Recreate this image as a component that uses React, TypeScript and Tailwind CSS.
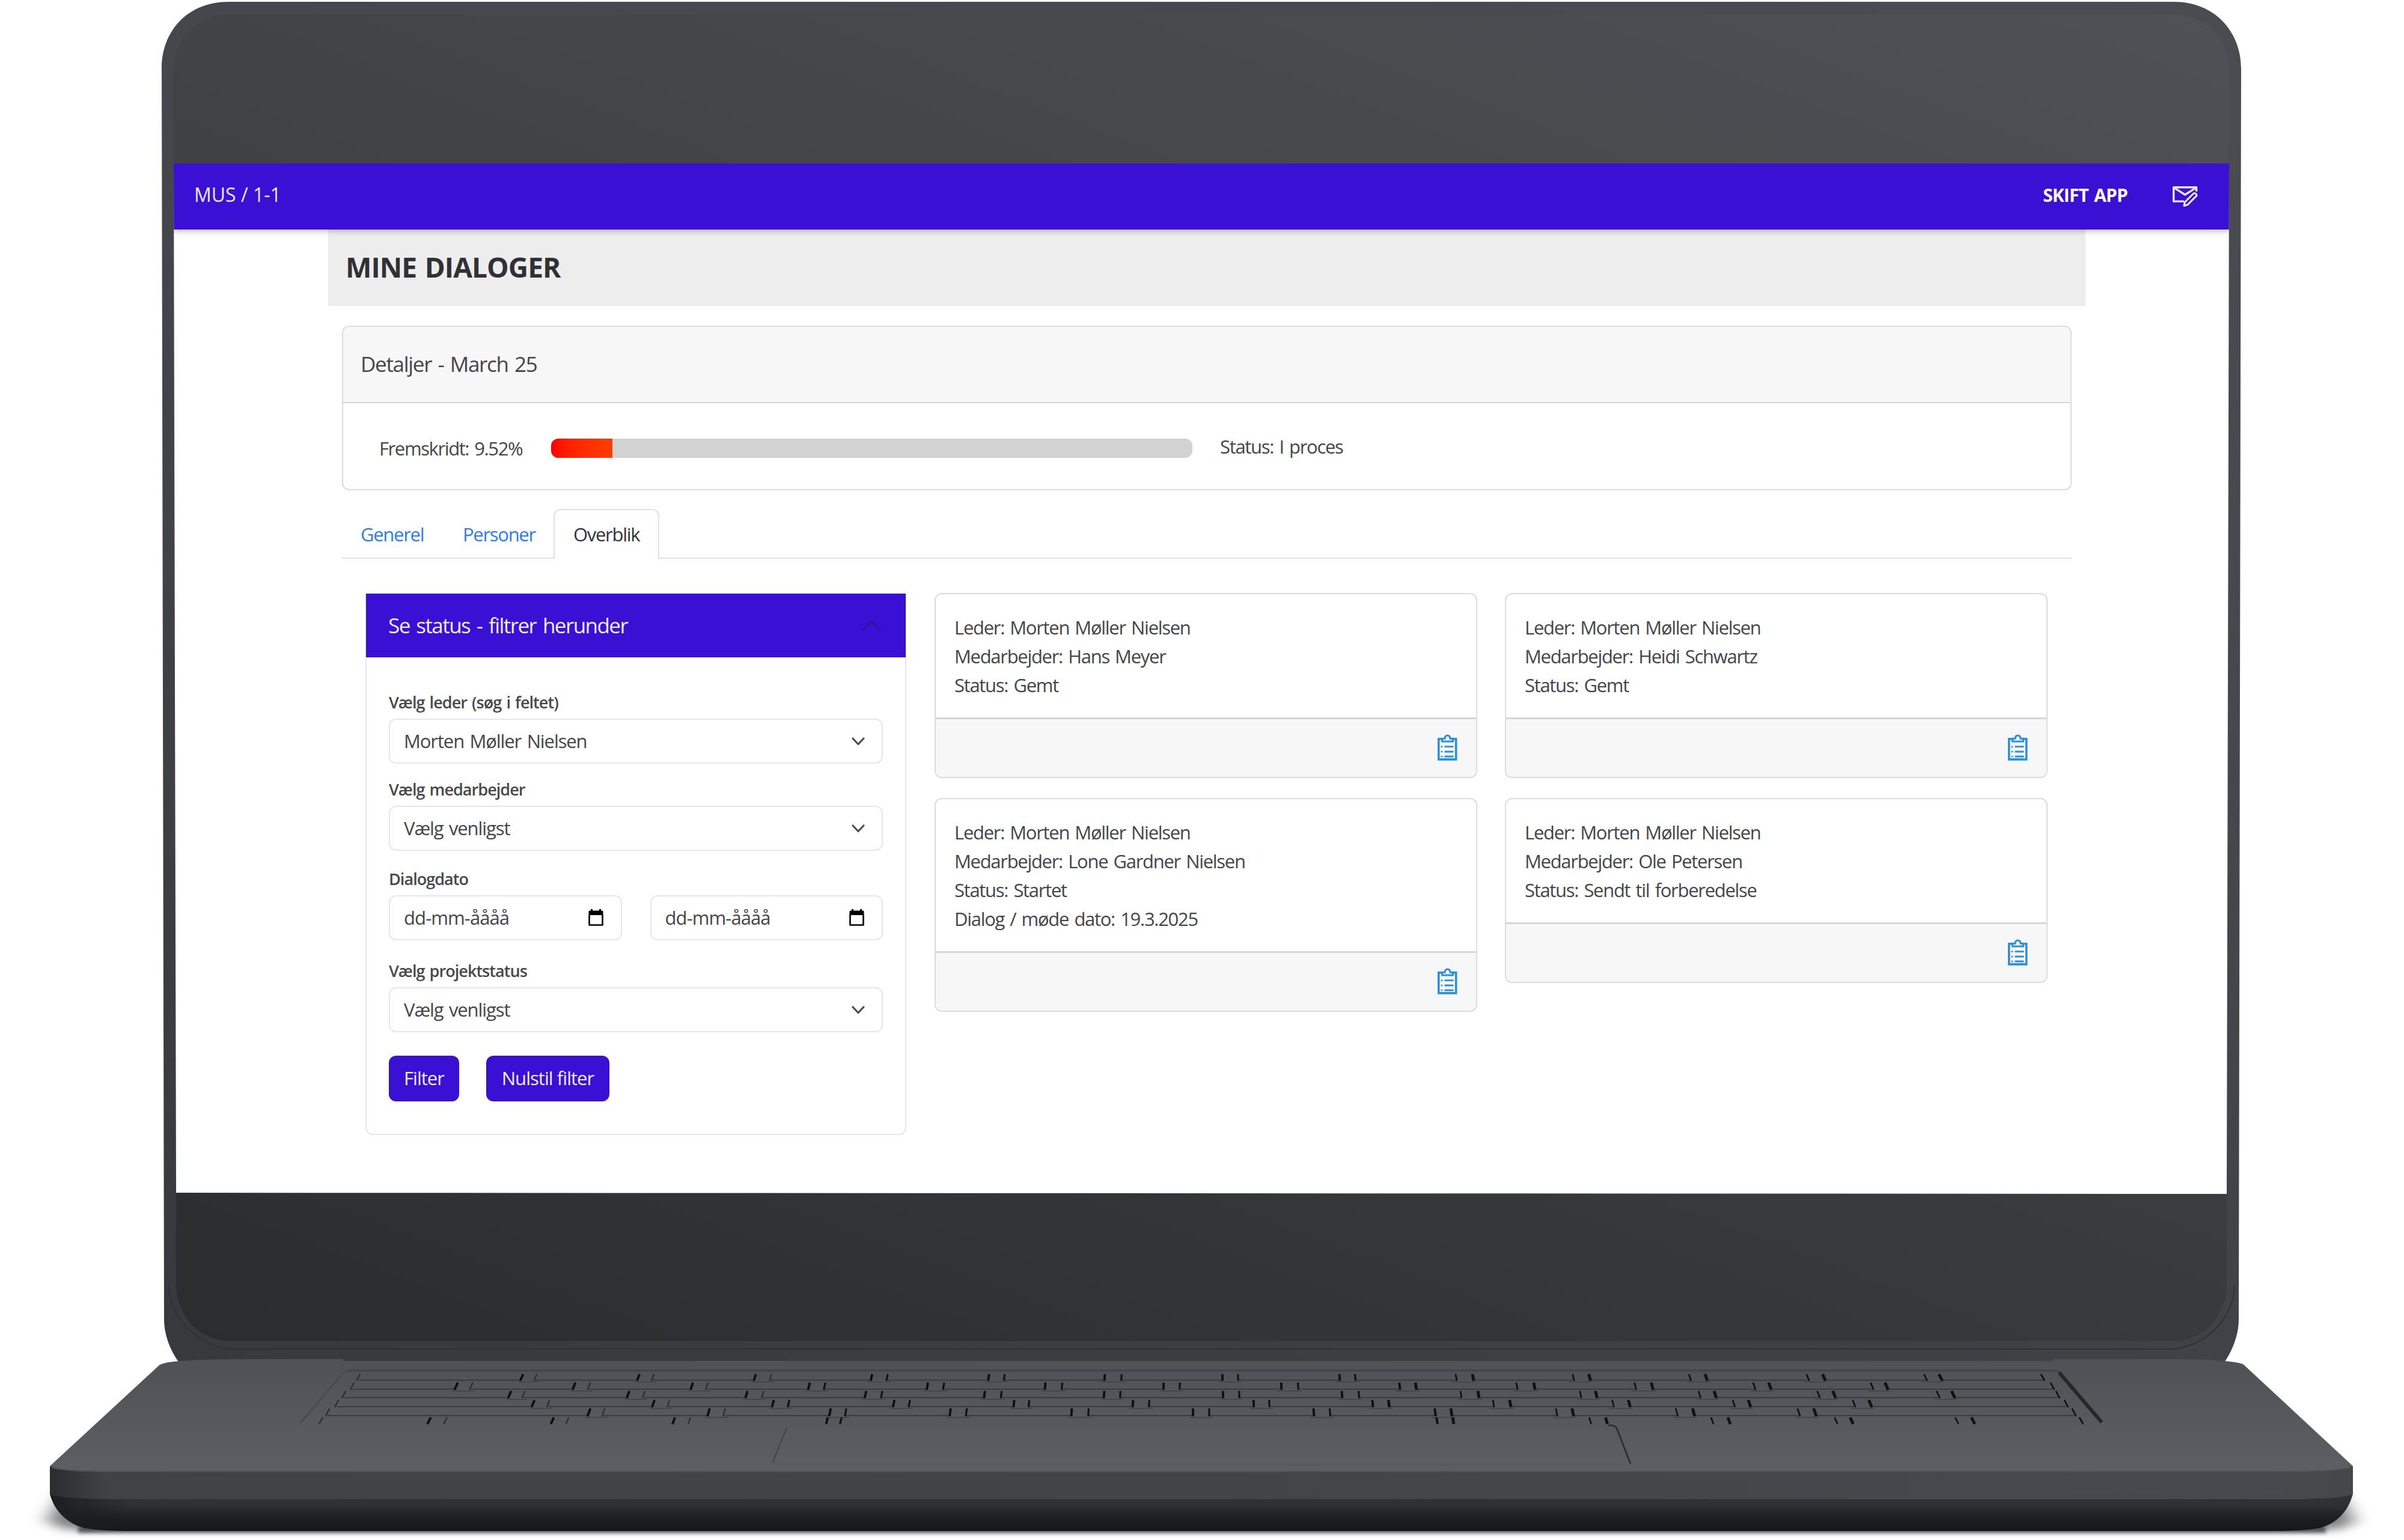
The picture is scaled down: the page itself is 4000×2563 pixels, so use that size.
import React from "react";
import clsx from "clsx";

interface KeyRow {
  top: number;
  bottom: number;
  start: number;
  end: number;
  gaps: [number, number][];
}

const keyRows: KeyRow[] = [
  {
    top: 2287, bottom: 2297, start: 596, end: 3399,
    gaps: [[868, 891], [1062, 1086], [1256, 1282], [1450, 1476], [1645, 1671], [1838, 1866], [2034, 2060], [2229, 2255], [2423, 2451], [2618, 2645], [2812, 2839], [3008, 3035], [3204, 3229]],
  },
  {
    top: 2301, bottom: 2312, start: 586, end: 3415,
    gaps: [[759, 784], [955, 980], [1151, 1176], [1346, 1372], [1543, 1570], [1739, 1767], [1936, 1963], [2132, 2160], [2329, 2356], [2524, 2553], [2721, 2749], [2919, 2945], [3115, 3139]],
  },
  {
    top: 2315, bottom: 2326, start: 572, end: 3424,
    gaps: [[848, 871], [1045, 1071], [1242, 1269], [1440, 1467], [1638, 1666], [1837, 1864], [2035, 2062], [2233, 2261], [2431, 2460], [2630, 2656], [2828, 2854], [3026, 3052], [3225, 3250]],
  },
  {
    top: 2330, bottom: 2341, start: 560, end: 3438,
    gaps: [[887, 912], [1087, 1112], [1286, 1312], [1487, 1513], [1687, 1712], [1885, 1912], [2086, 2112], [2284, 2311], [2485, 2513], [2684, 2711], [2885, 2911], [3085, 3112]],
  },
  {
    top: 2344, bottom: 2356, start: 545, end: 3451,
    gaps: [[980, 1004], [1179, 1205], [1381, 1407], [1581, 1608], [1783, 1811], [1985, 2012], [2186, 2213], [2388, 2415], [2590, 2617], [2790, 2818], [2993, 3020]],
  },
  {
    top: 2359, bottom: 2369, start: 534, end: 3463,
    gaps: [[714, 741], [919, 944], [1121, 1147], [1376, 1399], [2391, 2418], [2646, 2673], [2849, 2877], [3055, 3081], [3256, 3283]],
  },
];

// side edge of a key, leaning away from the middle of the keyboard
const edge = (x: number, top: number, bottom: number) => {
  const lean = (x - 2000) * 0.0045;
  return `M${(x - lean / 2).toFixed(1)} ${top}L${(x + lean / 2).toFixed(1)} ${bottom}`;
};

const Keyboard: React.FC = () => (
  <g fill="none">
    {keyRows.map((row, i) => {
      const lefts = [row.start, ...row.gaps.map((g) => g[1])];
      const rights = [...row.gaps.map((g) => g[0]), row.end];
      const last = i === keyRows.length - 1;
      return (
        <g key={row.top}>
          {!last &&
            lefts.map((l, k) => (
              <path key={l} d={`M${l} ${row.bottom}H${rights[k]}`} stroke="#3b3c40" strokeWidth={2.2} />
            ))}
          {!last &&
            row.gaps.map(([a, b]) => (
              <path key={a} d={`M${a - 6} ${row.bottom + 3}H${b + 6}`} stroke="#45464a" strokeWidth={2} />
            ))}
          {rights.map((x) => (
            <path key={x} d={edge(x, row.top, row.bottom + 1)} stroke="#0d0e0f" strokeWidth={x < 2400 ? 3.8 : 2.6} />
          ))}
          {lefts.map((x) => (
            <path
              key={x}
              d={edge(x, row.top, row.bottom + 1)}
              stroke={x < 1300 ? "#2b2c2f" : "#111214"}
              strokeWidth={x < 1300 ? 2.2 : x < 2300 ? 3.2 : 4.8}
            />
          ))}
        </g>
      );
    })}
  </g>
);

const Laptop: React.FC = () => (
  <svg className="absolute inset-0" width="4000" height="2563" viewBox="0 0 4000 2563">
    <defs>
      <linearGradient id="glass" gradientUnits="userSpaceOnUse" x1="289" y1="2232" x2="1460" y2="-836">
        <stop offset="0" stopColor="#2b2c2e" />
        <stop offset="1" stopColor="#505156" />
      </linearGradient>
      <linearGradient id="lid" gradientUnits="userSpaceOnUse" x1="289" y1="2232" x2="1460" y2="-836">
        <stop offset="0" stopColor="#38393d" />
        <stop offset="0.55" stopColor="#45464b" />
        <stop offset="1" stopColor="#4b4c51" />
      </linearGradient>
      <linearGradient id="deck" x1="0" y1="0" x2="0" y2="1">
        <stop offset="0" stopColor="#505156" />
        <stop offset="0.5" stopColor="#57585d" />
        <stop offset="1" stopColor="#5d5e63" />
      </linearGradient>
      <linearGradient id="front" x1="0" y1="0" x2="1" y2="0">
        <stop offset="0" stopColor="#2b2c2f" />
        <stop offset="0.025" stopColor="#414246" />
        <stop offset="0.5" stopColor="#434448" />
        <stop offset="0.95" stopColor="#48494e" />
        <stop offset="1" stopColor="#46474b" />
      </linearGradient>
      <linearGradient id="under" x1="0" y1="0" x2="0" y2="1">
        <stop offset="0" stopColor="#333438" />
        <stop offset="0.35" stopColor="#2f3033" />
        <stop offset="0.7" stopColor="#1d1e20" />
        <stop offset="1" stopColor="#161617" />
      </linearGradient>
      <linearGradient id="underSide" x1="0" y1="0" x2="1" y2="0">
        <stop offset="0" stopColor="#1c1d1f" />
        <stop offset="0.035" stopColor="#1c1d1f" stopOpacity="0" />
      </linearGradient>
      <filter id="soft" x="-5%" y="-50%" width="110%" height="200%">
        <feGaussianBlur stdDeviation="16 7" />
      </filter>
      <filter id="thin" x="-5%" y="-200%" width="110%" height="500%">
        <feGaussianBlur stdDeviation="3" />
      </filter>
    </defs>

    {/* lid */}
    <path
      d="M269 114C269 52 312 3 380 3H3618C3684 3 3729 52 3729 114L3725 2196C3725 2222 3714 2250 3699 2270H300C284 2250 273 2222 273 2196Z"
      fill="url(#lid)"
    />
    <path d="M381 2245C324 2236 283 2192 281 2140M3620 2245C3676 2236 3716 2192 3718 2140M377 2245H3622" fill="none" stroke="#303135" strokeWidth="2" />
    <path
      d="M289 120C289 66 326 24 380 24H3616C3670 24 3709 66 3709 120L3705 2140C3704 2188 3668 2232 3616 2232H384C330 2232 294 2188 293 2140Z"
      fill="url(#glass)"
    />

    {/* ground shadow */}
    <path d="M78 2532L105 2485H3892L3918 2532L3890 2546H110Z" fill="#000" opacity="0.5" filter="url(#soft)" />
    <path d="M130 2540H3870V2551H130Z" fill="#222" opacity="0.7" filter="url(#thin)" />

    {/* base */}
    <path
      d="M83 2480L83 2486C90 2512 108 2534 140 2543C160 2547 190 2548 220 2548H3780C3810 2548 3840 2547 3860 2543C3892 2534 3908 2512 3915 2486V2480Z"
      fill="url(#under)"
    />
    <path
      d="M83 2480L83 2486C90 2512 108 2534 140 2543C160 2547 190 2548 220 2548H3780V2480Z"
      fill="url(#underSide)"
    />
    <path d="M83 2440V2487C100 2493 140 2495 190 2495H3810C3860 2495 3898 2493 3915 2487V2440Z" fill="url(#front)" />
    <path
      d="M83 2440L264 2273C268 2268 290 2265 320 2264C350 2262 400 2262 571 2262V2265H3416V2262H3620C3680 2262 3726 2266 3733 2271L3915 2440C3900 2446 3870 2449 3810 2449H190C130 2449 96 2446 83 2440Z"
      fill="url(#deck)"
    />
    <path d="M86 2442C98 2446 130 2449 190 2449H3810C3870 2449 3900 2446 3912 2442" fill="none" stroke="#505156" strokeWidth="2" />

    {/* keyboard tray */}
    <path d="M500 2368L571 2285C574 2281 580 2281 590 2281" fill="none" stroke="#4a4b4f" strokeWidth="3" />
    <path d="M580 2281H3410C3420 2281 3424 2281 3430 2287" fill="none" stroke="#45464a" strokeWidth="4" />
    <path d="M3426 2284L3497 2367" fill="none" stroke="#26272a" strokeWidth="6" />
    <Keyboard />

    {/* trackpad */}
    <path d="M2680 2373H1318C1312 2373 1310 2374 1309 2377L1286 2432C1285 2436 1288 2437 1293 2437H2700" fill="none" stroke="#55565b" strokeWidth="1.5" />
    <path d="M1309 2376L1286 2433" stroke="#424347" strokeWidth="2" />
    <path d="M2676 2372C2686 2372 2689 2374 2690 2377L2713 2436" fill="none" stroke="#2b2c2f" strokeWidth="2.6" />
  </svg>
);

const MailEdit: React.FC = () => (
  <svg className="w-[42px] h-[34px]" viewBox="0 0 124 100" fill="none" stroke="#ebe7fb" strokeWidth="10" strokeLinejoin="round">
    <path d="M117 26V5H5V74H56" />
    <path d="M5 6L61 41L117 6" />
    <path d="M56 96L60 78L102 36C108 31 119 36 118 46L74 90Z" strokeWidth="9" />
  </svg>
);

const ClipboardList: React.FC = () => (
  <svg className="w-[33px] h-[44px]" viewBox="0 0 33 44" fill="none" stroke="#2b8fe0">
    <path d="M8 7.8H1.8V41.9H30.7V7.8H24.5" strokeWidth="3.6" />
    <path d="M7.5 7.2V12H25.5V7.2H21C20.5 0.2 12.5 0.2 12 7.2Z" strokeWidth="3" />
    <path d="M11.5 20.7H26.5M11.5 29H26.5M11.5 37H26.5" strokeWidth="2.8" />
    <path d="M5.6 20.7H8.4M5.6 29H8.4M5.6 37H8.4" strokeWidth="2.4" />
  </svg>
);

const Calendar: React.FC = () => (
  <svg className="w-[25px] h-[29px]" viewBox="0 0 25 29" fill="none">
    <path d="M5.5 0V4M19.5 0V4" stroke="#000" strokeWidth="3" />
    <path d="M1.5 9V26.5H23.5V9" stroke="#000" strokeWidth="2.6" strokeLinejoin="round" />
    <path d="M0.5 4.5C0.5 3 1.5 2.5 3 2.5H22C23.5 2.5 24.5 3 24.5 4.5V10H0.5Z" fill="#000" />
  </svg>
);

const Chevron: React.FC = () => (
  <svg className="w-[24px] h-[16px]" viewBox="0 0 24 16" fill="none" stroke="#484d52" strokeWidth="3.2" strokeLinecap="round" strokeLinejoin="round">
    <path d="M3 3L12 12.5L21 3" />
  </svg>
);

const Label: React.FC<{ children: React.ReactNode }> = ({ children }) => (
  <label className="block h-[40px] mb-2 text-[27px] leading-[41px] font-semibold tracking-[-0.95px] [word-spacing:2px] text-[#46484b]">{children}</label>
);

const Select: React.FC<{ value: string }> = ({ value }) => (
  <div className="h-[75px] flex items-center justify-between pl-[23px] pr-[27px] border-2 border-[#e4e7eb] rounded-xl">
    <span className="tracking-[-1.1px]">{value}</span>
    <Chevron />
  </div>
);

const DateInput: React.FC = () => (
  <div className="flex-1 h-[75px] flex items-center justify-between pl-[23px] pr-[29px] border-2 border-[#e4e7eb] rounded-xl">
    <span className="tracking-[-0.9px]">dd-mm-åååå</span>
    <Calendar />
  </div>
);

const Button: React.FC<{ className: string; children: React.ReactNode }> = ({ className, children }) => (
  <button className={clsx("h-[76px] pb-px rounded-xl bg-[#3a10d4] text-[#f0edfc] text-center tracking-[-0.95px]", className)}>{children}</button>
);

const dialogs = [
  ["Leder: Morten Møller Nielsen", "Medarbejder: Hans Meyer", "Status: Gemt"],
  ["Leder: Morten Møller Nielsen", "Medarbejder: Heidi Schwartz", "Status: Gemt"],
  ["Leder: Morten Møller Nielsen", "Medarbejder: Lone Gardner Nielsen", "Status: Startet", "Dialog / møde dato: 19.3.2025"],
  ["Leder: Morten Møller Nielsen", "Medarbejder: Ole Petersen", "Status: Sendt til forberedelse"],
];

const DialogCard: React.FC<{ lines: string[] }> = ({ lines }) => (
  <div className="border-2 border-[#dcdcdc] rounded-xl overflow-hidden">
    <div className="pt-[31px] pb-[30px] pl-[31px] leading-[48px]">
      {lines.map((line) => (
        <p key={line}>{line}</p>
      ))}
    </div>
    <div className="h-[99px] flex items-center justify-end pr-[31px] pb-[2px] bg-[#f7f7f7] border-t-3 border-[#d6d6d6]">
      <ClipboardList />
    </div>
  </div>
);

export default function App() {
  const progress = 9.52;

  return (
    <div className="relative w-[4000px] h-[2563px] overflow-hidden bg-white pt-[272px] pl-[289px]">
      <Laptop />

      <div className="relative w-[3420px] h-[1715px] bg-white [clip-path:polygon(0_0,100%_0,3416px_100%,4px_1713px)] font-['Open_Sans','Noto_Sans',sans-serif] text-[31px] tracking-[-1.3px] [word-spacing:2.5px] text-[#434548]">
        <header className="relative h-[110px] flex items-center pl-[34px] pr-[52px] bg-[#3a10d4] text-white shadow-[0_2px_10px_rgba(0,0,0,0.3)]">
          <span className="mr-auto pb-[6px] text-[32px] tracking-[0px] [word-spacing:0px] text-[#ece8fb]">MUS / 1-1</span>
          <span className="mr-[75px] pb-[6px] text-[30px] font-bold tracking-[-0.9px]">SKIFT APP</span>
          <MailEdit />
        </header>

        <main className="w-[2924px] ml-[257px]">
          <h1 className="h-[127px] pl-[29px] leading-[125px] bg-[#ededed] text-[46px] font-bold tracking-[-0.9px] text-[#303134]">MINE DIALOGER</h1>

          <div className="px-[23px] pt-[33px]">
            <section className="h-[274px] border-2 border-[#dcdcdc] rounded-xl overflow-hidden">
              <h2 className="h-[127px] pl-[29px] leading-[124px] bg-[#f7f7f7] border-b-2 border-[#d6d6d6] text-[35px] tracking-[-1.3px]">Detaljer - March 25</h2>
              <div className="h-[143px] flex items-center pl-[60px] pt-[6px]">
                <span className="w-[286px] pt-[2px] tracking-[-1.4px]">Fremskridt: 9.52%</span>
                <div className="w-[1067px] h-[32px] mr-[46px] rounded-[12px] overflow-hidden bg-[#d2d2d2]">
                  <div className="h-full bg-linear-to-r from-[#ff0000] to-[#ff3d00]" style={{ width: `${progress}%` }} />
                </div>
                <span className="pb-1">Status: I proces</span>
              </div>
            </section>

            <nav className="flex h-[83px] mt-[31px] leading-[80px]">
              <a className="w-[168px] pl-[31px] pt-[2px] border-b-2 border-[#dee2e6] text-[#2b7cf3]">Generel</a>
              <a className="w-[184px] pl-[33px] pt-[2px] border-b-2 border-[#dee2e6] text-[#2b7cf3]">Personer</a>
              <a className="w-[176px] pl-[31px] border-2 border-b-0 border-[#dee2e6] rounded-t-xl text-[#2f3236]">Overblik</a>
              <span className="flex-1 border-b-2 border-[#dee2e6]" />
            </nav>

            <div className="flex items-start gap-[47px] pt-[57px] px-[39px]">
              <section className="w-[900px] h-[902px] border-2 border-[#e4e7eb] rounded-b-xl">
                <h3 className="h-[106px] -mx-px -mt-px flex items-center justify-between pl-[37px] pr-[40px] bg-[#3a10d4] text-[35px] tracking-[-1.55px] [word-spacing:3px] text-[#f0edfc]">
                  Se status - filtrer herunder
                  <svg className="w-[34px] h-[20px]" viewBox="0 0 34 20" fill="none" stroke="#1e1f86" strokeWidth="2.4">
                    <path d="M2 18L17 3L32 18" />
                  </svg>
                </h3>
                <form className="px-[37px] pt-[54px]">
                  <Label>Vælg leder (søg i feltet)</Label>
                  <Select value="Morten Møller Nielsen" />
                  <div className="mt-[22px]">
                    <Label>Vælg medarbejder</Label>
                    <Select value="Vælg venligst" />
                  </div>
                  <div className="mt-[26px]">
                    <Label>Dialogdato</Label>
                    <div className="flex gap-[47px]">
                      <DateInput />
                      <DateInput />
                    </div>
                  </div>
                  <div className="mt-[30px]">
                    <Label>Vælg projektstatus</Label>
                    <Select value="Vælg venligst" />
                  </div>
                  <div className="flex gap-[45px] mt-[39px]">
                    <Button className="w-[117px]">Filter</Button>
                    <Button className="w-[205px]">Nulstil filter</Button>
                  </div>
                </form>
              </section>

              <div className="grid grid-cols-2 items-start gap-x-[46px] gap-y-[33px] w-[1852px]">
                {dialogs.map((lines, i) => (
                  <DialogCard key={i} lines={lines} />
                ))}
              </div>
            </div>
          </div>
        </main>
      </div>
    </div>
  );
}
